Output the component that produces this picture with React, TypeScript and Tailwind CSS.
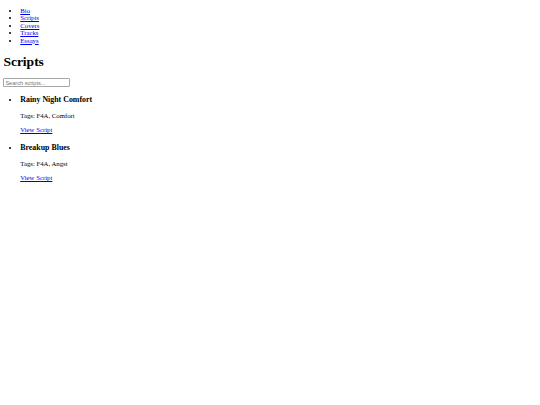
export default function App() {
  const nav = ["Bio", "Scripts", "Covers", "Tracks", "Essays"];
  const scripts = [
    { title: "Rainy Night Comfort", tags: "F4A, Comfort" },
    { title: "Breakup Blues", tags: "F4A, Angst" },
  ];
  return (
    <div className="min-h-screen bg-white px-[3.375px] pt-[6.5px] font-['Liberation_Serif','Times_New_Roman',serif] text-[6.75px] leading-[7.6px] text-black">
      <nav>
        <ul className="list-disc pl-[16.875px]">
          {nav.map((n) => (
            <li key={n}>
              <a href="#" className="text-[#0000ee] underline">
                {n}
              </a>
            </li>
          ))}
        </ul>
      </nav>
      <h1 className="my-[9.05px] text-[13.5px] font-bold leading-[15.5px]">Scripts</h1>
      <div className="h-[9px]">
        <input
          type="text"
          placeholder="Search scripts..."
          className="block h-[8.9px] w-[66.5px] rounded-[1px] border border-[#a8a8a8] bg-white px-[1px] font-['Liberation_Sans',Arial,sans-serif] text-[5.6px] leading-[6px] placeholder:text-[#757575]"
        />
      </div>
      <ul className="mt-[7.9px] list-disc pl-[16.875px]">
        {scripts.map((s, i) => (
          <li key={s.title} className={i > 0 ? "mt-[9.9px]" : ""}>
            <h3 className="text-[7.9px] font-bold leading-[9.07px]">{s.title}</h3>
            <p className="mb-[6.75px] mt-[7.6px]">Tags: {s.tags}</p>
            <a href="#" className="text-[#0000ee] underline">
              View Script
            </a>
          </li>
        ))}
      </ul>
    </div>
  );
}
